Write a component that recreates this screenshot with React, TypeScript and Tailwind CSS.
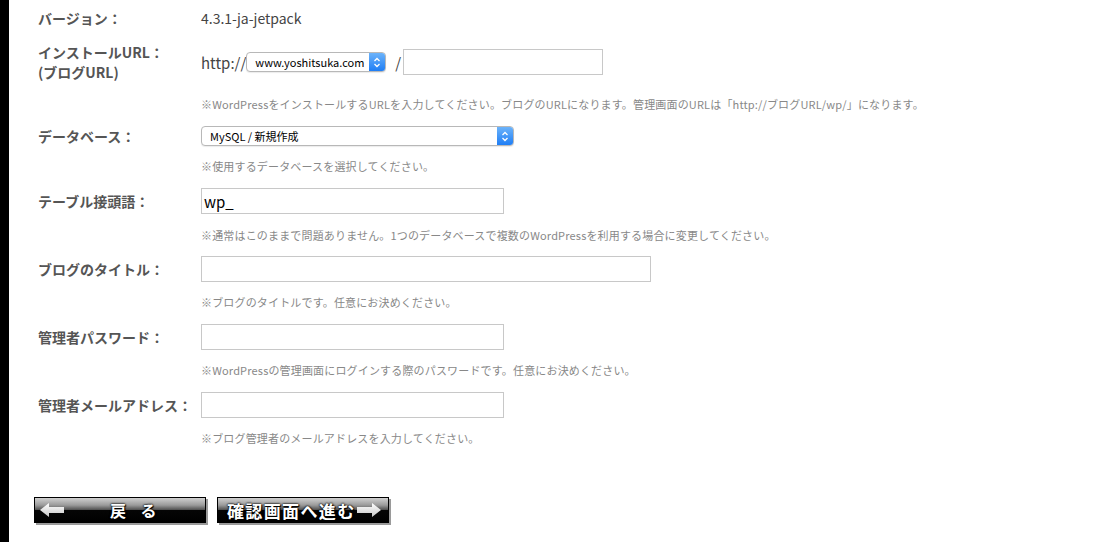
import React from "react";

const font = { fontFamily: '"Noto Sans CJK JP", "Noto Sans", sans-serif' };

function Chevrons() {
  return (
    <svg width="8" height="11" viewBox="0 0 8 11">
      <path d="M1.5 4 L4 1.5 L6.5 4" fill="none" stroke="#fff" strokeWidth="1.3" />
      <path d="M1.5 7 L4 9.5 L6.5 7" fill="none" stroke="#fff" strokeWidth="1.3" />
    </svg>
  );
}

function MacSelect({ text, w }: { text: string; w: string }) {
  return (
    <div className={`${w} h-[20px] flex items-stretch rounded-[4px] border border-[#b8b8b8] bg-white overflow-hidden shadow-[0_1px_1px_rgba(0,0,0,0.08)]`}>
      <div className="flex-1 flex items-center pl-[8px] text-[11px] text-black leading-none">{text}</div>
      <div className="w-[16px] flex items-center justify-center bg-[linear-gradient(to_bottom,#6cb3fa,#1f7ef5)]">
        <Chevrons />
      </div>
    </div>
  );
}

function Label({ children }: { children: React.ReactNode }) {
  return <div className="w-[163px] shrink-0 text-[14px] font-bold text-[#555] leading-[20px]">{children}</div>;
}

function Note({ children, mt }: { children: React.ReactNode; mt: string }) {
  return (
    <div className={`${mt} pl-[163px] text-[11px] text-[#888] leading-[16px] h-[16px] whitespace-nowrap tracking-[0.015em]`}>{children}</div>
  );
}

function Input({ w, value }: { w: string; value?: string }) {
  return (
    <div className={`${w} h-[26px] border border-[#c8c8c8] bg-white flex items-center pl-[2px] text-[15px] text-black leading-none`}>
      {value}
    </div>
  );
}

function FieldRow({ label, w, value, mt }: { label: string; w: string; value?: string; mt: string }) {
  return (
    <div className={`${mt} flex items-center h-[26px]`}>
      <Label>{label}</Label>
      <Input w={w} value={value} />
    </div>
  );
}

function Arrow({ dir }: { dir: "left" | "right" }) {
  const pts = dir === "left" ? "0,7 9,0 9,4 24,4 24,10 9,10 9,14" : "24,7 15,0 15,4 0,4 0,10 15,10 15,14";
  return (
    <svg width="25" height="15" viewBox="0 0 25 15">
      <defs>
        <linearGradient id={`ag-${dir}`} x1="0" y1="0" x2="0" y2="1">
          <stop offset="0" stopColor="#ffffff" />
          <stop offset="1" stopColor="#c8c8c8" />
        </linearGradient>
      </defs>
      <polygon points={pts} fill={`url(#ag-${dir})`} />
    </svg>
  );
}

function GlossButton({ children }: { children: React.ReactNode }) {
  return (
    <div className="w-[172px] h-[26px] border border-black bg-[linear-gradient(to_bottom,#d0d0d0_0%,#9a9a9a_30%,#555_48%,#050505_52%,#000_100%)] shadow-[2px_2px_0_#9a9a9a] flex items-center text-white font-bold">
      {children}
    </div>
  );
}

export default function App() {
  return (
    <div className="w-[1094px] h-[542px] flex bg-white overflow-hidden" style={font}>
      <div className="w-[9px] bg-black shrink-0" />
      <div className="flex-1 pl-[29px] pt-[9px]">
        <div className="flex items-center h-[18px]">
          <Label>バージョン：</Label>
          <div className="text-[14px] text-[#444] leading-[18px]">4.3.1-ja-jetpack</div>
        </div>

        <div className="mt-[15px] flex items-center h-[40px]">
          <Label>
            インストールURL：
            <br />
            (ブログURL)
          </Label>
          <div className="flex items-center">
            <span className="text-[15px] text-[#444] leading-none">http://</span>
            <MacSelect text="www.yoshitsuka.com" w="w-[140px]" />
            <span className="ml-[9px] mr-[2px] text-[15px] text-[#444] leading-none">/</span>
            <Input w="w-[200px]" />
          </div>
        </div>
        <Note mt="mt-[14px]">
          ※WordPressをインストールするURLを入力してください。ブログのURLになります。管理画面のURLは「http://ブログURL/wp/」になります。
        </Note>

        <div className="mt-[14px] flex items-center h-[20px]">
          <Label>データベース：</Label>
          <MacSelect text="MySQL / 新規作成" w="w-[313px]" />
        </div>
        <Note mt="mt-[12px]">※使用するデータベースを選択してください。</Note>

        <FieldRow mt="mt-[14px]" label="テーブル接頭語：" w="w-[303px]" value="wp_" />
        <Note mt="mt-[13px]">※通常はこのままで問題ありません。1つのデータベースで複数のWordPressを利用する場合に変更してください。</Note>

        <FieldRow mt="mt-[13px]" label="ブログのタイトル：" w="w-[450px]" />
        <Note mt="mt-[12px]">※ブログのタイトルです。任意にお決めください。</Note>

        <FieldRow mt="mt-[14px]" label="管理者パスワード：" w="w-[303px]" />
        <Note mt="mt-[12px]">※WordPressの管理画面にログインする際のパスワードです。任意にお決めください。</Note>

        <FieldRow mt="mt-[14px]" label="管理者メールアドレス：" w="w-[303px]" />
        <Note mt="mt-[12px]">※ブログ管理者のメールアドレスを入力してください。</Note>

        <div className="mt-[51px] -ml-[4px] flex gap-[11px]">
          <GlossButton>
            <div className="ml-[5px]"><Arrow dir="left" /></div>
            <div className="ml-[45px] text-[16px] leading-none tracking-[0.9em] [text-shadow:0_0_2px_#000,0_0_2px_#000,1px_1px_1px_#000]">戻る</div>
          </GlossButton>
          <GlossButton>
            <div className="ml-[9px] text-[17px] leading-none tracking-[0.08em] [text-shadow:0_0_2px_#000,0_0_2px_#000,1px_1px_1px_#000]">確認画面へ進む</div>
            <div className="ml-[1px]"><Arrow dir="right" /></div>
          </GlossButton>
        </div>
      </div>
    </div>
  );
}
